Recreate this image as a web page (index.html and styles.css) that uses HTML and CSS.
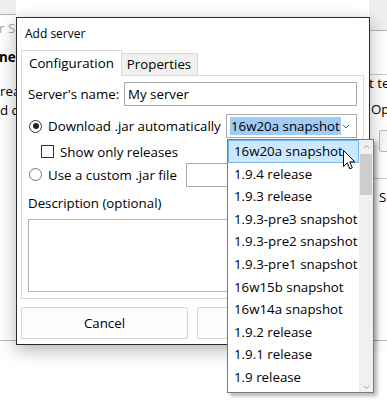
FILE: index.html
```html
<!DOCTYPE html>
<html lang="en">
<head>
    <meta charset="UTF-8">
    <title>Add server</title>
    <link rel="stylesheet" href="styles.css">
</head>
<body>
<div class="desktop">

    <!-- window behind the dialog, only its edges show -->
    <div class="back-window">
        <div class="back-left">
            <div class="back-top"></div>
            <div class="back-title">r St</div>
            <div class="back-bold">nec</div>
            <div class="back-line first">rea</div>
            <div class="back-line">d d</div>
        </div>
        <div class="back-gap"></div>
        <div class="back-right">
            <div class="back-top tall"></div>
            <div class="back-box">t te</div>
            <div class="back-open">Ope</div>
            <div class="back-btn"></div>
            <div class="back-sep"></div>
            <div class="back-s">S</div>
        </div>
    </div>

    <div class="dialog">
        <div class="title-bar">Add server</div>

        <div class="tabs">
            <div class="tab active">Configuration</div>
            <div class="tab">Properties</div>
        </div>

        <div class="tab-panel">
            <div class="row name-row">
                <label for="name">Server's name:</label>
                <input class="field name-field" id="name" type="text" value="My server">
            </div>

            <div class="row download-row">
                <span class="radio checked"></span>
                <span class="option-text">Download .jar automatically</span>
                <div class="combo">
                    <span class="combo-value">16w20a snapshot</span>
                    <svg class="chevron" width="8" height="5" viewBox="0 0 8 5"><path d="M1 1 L4 4 L7 1" fill="none" stroke="#666" stroke-width="1"/></svg>
                </div>
            </div>

            <div class="row releases-row">
                <span class="checkbox"></span>
                <span class="option-text">Show only releases</span>
            </div>

            <div class="row custom-row">
                <span class="radio"></span>
                <span class="option-text">Use a custom .jar file</span>
                <div class="field jar-field"></div>
            </div>

            <div class="desc-label">Description (optional)</div>
            <div class="field desc-field"></div>
        </div>

        <div class="buttons">
            <button class="btn">Cancel</button>
            <button class="btn"></button>
        </div>
    </div>

    <!-- open combo list -->
    <div class="dropdown">
        <ul class="options">
            <li class="selected">16w20a snapshot</li>
            <li>1.9.4 release</li>
            <li>1.9.3 release</li>
            <li>1.9.3-pre3 snapshot</li>
            <li>1.9.3-pre2 snapshot</li>
            <li>1.9.3-pre1 snapshot</li>
            <li>16w15b snapshot</li>
            <li>16w14a snapshot</li>
            <li>1.9.2 release</li>
            <li>1.9.1 release</li>
            <li>1.9 release</li>
        </ul>
        <div class="scrollbar">
            <svg width="7" height="5" viewBox="0 0 7 5"><path d="M1 4 L3.5 1.5 L6 4" fill="none" stroke="#a0a0a0" stroke-width="1"/></svg>
            <div class="thumb"></div>
            <div class="track"></div>
            <svg width="7" height="5" viewBox="0 0 7 5"><path d="M1 1 L3.5 3.5 L6 1" fill="none" stroke="#a0a0a0" stroke-width="1"/></svg>
        </div>
    </div>

    <svg class="cursor" width="14" height="22" viewBox="0 0 14 22">
        <path d="M0.5 0.5 L0.5 16.5 L4.3 12.8 L6.8 18.8 L9.3 17.8 L6.8 11.9 L11.8 11.9 Z" fill="#fff" stroke="#000" stroke-width="1" stroke-linejoin="miter"/>
    </svg>
</div>
</body>
</html>
```

FILE: styles.css
```css
* {
    margin: 0;
    padding: 0;
    box-sizing: border-box;
}

body {
    font-family: "Open Sans", "Noto Sans", sans-serif;
    font-size: 13.3px;
    color: #000;
    background: #fff;
}

.desktop {
    position: relative;
    width: 387px;
    height: 416px;
    overflow: hidden;
    background: #fff;
}

/* ---- background window ---- */
.back-window {
    position: absolute;
    left: 0;
    top: 0;
    width: 387px;
    height: 341px;
    display: flex;
    border-bottom: 1px solid #b5b5b5;
}

.back-left {
    width: 16px;
    overflow: hidden;
    white-space: nowrap;
}

.back-gap {
    width: 353px;
}

.back-right {
    flex: 1;
    overflow: hidden;
    white-space: nowrap;
}

.back-top {
    height: 15px;
    background: #efefef;
    border-bottom: 1px solid #b0b0b0;
}

.back-top.tall {
    height: 31px;
}

.back-title {
    color: #a8a8a8;
    margin: 4px 0 0 -1px;
}

.back-bold {
    font-weight: bold;
    margin: 11px 0 0 -1px;
}

.back-line {
    margin-top: 16px;
}

.back-line + .back-line {
    margin-top: 1px;
}

.back-box {
    margin-top: 43px;
    border-top: 1px solid #c8c8c8;
    height: 18px;
    line-height: 16px;
}

.back-open {
    margin-top: 6px;
    padding-left: 1px;
    border-left: 1px solid #c8c8c8;
    height: 22px;
    line-height: 22px;
}

.back-btn {
    margin: 10px 0 0 10px;
    height: 22px;
    border: 1px solid #b8b8b8;
    border-right: none;
    border-radius: 3px 0 0 3px;
    background: #f6f6f6;
}

.back-sep {
    margin-top: 26px;
    border-top: 1px solid #c8c8c8;
}

.back-s {
    margin: 8px 0 0 10px;
    line-height: 20px;
}

/* ---- dialog ---- */
.dialog {
    position: absolute;
    left: 16px;
    top: 17px;
    width: 354px;
    height: 328px;
    background: #fff;
    border: 1px solid #2a2a2a;
    box-shadow: 0 5px 16px rgba(0, 0, 0, 0.3);
    padding: 0 5px 0 4px;
}

.title-bar {
    height: 32px;
    line-height: 31px;
    font-size: 12px;
    padding-left: 4px;
}

.tabs {
    display: flex;
    align-items: flex-end;
    height: 26px;
    position: relative;
    z-index: 1;
}

.tab {
    height: 23px;
    line-height: 21px;
    padding: 0 6px 0 5px;
    background: #f0f0f0;
    border: 1px solid #d9d9d9;
    border-left: none;
}

    .tab.active {
        height: 26px;
        line-height: 25px;
        padding: 0 7px;
        background: #fff;
        border-left: 1px solid #d9d9d9;
        border-bottom: none;
    }

.tab-panel {
    margin-top: -1px;
    height: 224px;
    border: 1px solid #d9d9d9;
    padding: 6px 6px 0 6px;
}

.row {
    display: flex;
    align-items: center;
}

.field {
    border: 1px solid #a9a9a9;
    background: #fff;
}

.name-row {
    justify-content: space-between;
    height: 24px;
    white-space: nowrap;
}

.name-field {
    width: 233px;
    height: 24px;
    font: inherit;
    padding: 0 3px;
    outline: none;
}

.download-row {
    margin-top: 8px;
    height: 24px;
}

.radio {
    width: 13px;
    height: 13px;
    border: 1px solid #333;
    border-radius: 50%;
    margin: 0 6px 0 1px;
    position: relative;
    flex-shrink: 0;
}

    .radio.checked::after {
        content: "";
        position: absolute;
        left: 2.5px;
        top: 2.5px;
        width: 6px;
        height: 6px;
        border-radius: 50%;
        background: #222;
    }

.custom-row .radio {
    border-color: #777;
}

.option-text {
    white-space: nowrap;
}

.combo {
    margin-left: auto;
    width: 131px;
    height: 24px;
    border: 1px solid #acacac;
    display: flex;
    align-items: center;
    padding: 0 6px 0 3px;
}

.combo-value {
    background: #9fcbf5;
    line-height: 18px;
    padding: 0 1px;
    white-space: nowrap;
}

.chevron {
    margin-left: auto;
    flex-shrink: 0;
}

.releases-row {
    margin-top: 2px;
    height: 23px;
    padding-left: 13px;
}

.checkbox {
    width: 13px;
    height: 13px;
    border: 1px solid #333;
    margin-right: 6px;
}

.custom-row {
    height: 23px;
}

.jar-field {
    margin-left: 9px;
    flex: 1;
    height: 24px;
}

.desc-label {
    margin-top: 5px;
    line-height: 24px;
}

.desc-field {
    margin-top: 4px;
    height: 73px;
    border-color: #b4b4b4;
}

.buttons {
    display: flex;
    gap: 9px;
    margin-top: 8px;
}

.btn {
    flex: 1;
    height: 32px;
    font: inherit;
    color: #000;
    background: #fdfdfd;
    border: 1px solid #d6d6d6;
    border-radius: 2px;
}

/* ---- open list ---- */
.dropdown {
    position: absolute;
    left: 227px;
    top: 139px;
    width: 147px;
    height: 254px;
    background: #fff;
    border: 1px solid #7a7a7a;
    box-shadow: 3px 3px 4px rgba(0, 0, 0, 0.3);
    display: flex;
    z-index: 2;
}

.options {
    list-style: none;
    flex: 1;
}

    .options li {
        height: 22.6px;
        line-height: 21px;
        padding-left: 5px;
        white-space: nowrap;
        border: 1px solid transparent;
    }

        .options li.selected {
            background: #cce8ff;
            border-color: #7ab8ec;
        }

.scrollbar {
    width: 14px;
    background: #f0f0f0;
    display: flex;
    flex-direction: column;
    align-items: center;
    padding: 4px 0 2px;
}

    .scrollbar svg {
        flex-shrink: 0;
    }

.thumb {
    width: 12px;
    height: 41px;
    margin-top: 5px;
    background: #cdcdcd;
}

.track {
    flex: 1;
}

.cursor {
    position: absolute;
    left: 343px;
    top: 150px;
    z-index: 3;
}
```
